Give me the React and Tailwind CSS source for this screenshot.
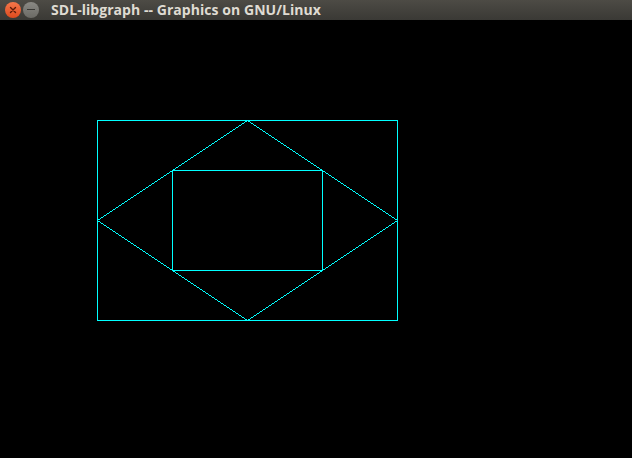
export default function App() {
  return (
    <div className="w-[632px] h-[458px] flex flex-col bg-black overflow-hidden">
      {/* title bar */}
      <div className="h-[20px] flex items-center bg-gradient-to-b from-[#4d4b45] to-[#3a3935] shrink-0">
        <div className="flex items-center gap-[2px] pl-[5px] -mt-[1px]">
          <div className="w-[16px] h-[16px] rounded-full bg-gradient-to-b from-[#f4764a] to-[#dd4a1c] flex items-center justify-center">
            <svg width="8" height="8" viewBox="0 0 8 8">
              <path d="M1.5 1.5 L6.5 6.5 M6.5 1.5 L1.5 6.5" stroke="#5a1a08" strokeWidth="1.4" strokeLinecap="round" />
            </svg>
          </div>
          <div className="w-[16px] h-[16px] rounded-full bg-gradient-to-b from-[#8a8984] to-[#6b6a65] flex items-center justify-center">
            <div className="w-[8px] h-[1.5px] bg-[#3a3935]" />
          </div>
        </div>
        <span
          className="ml-[12px] text-[14px] font-bold text-[#dfdbd2] leading-none tracking-[0.05px]"
          style={{ fontFamily: '"Open Sans", "DejaVu Sans", sans-serif' }}
        >
          SDL-libgraph -- Graphics on GNU/Linux
        </span>
      </div>

      {/* canvas */}
      <svg width="632" height="438" viewBox="0 20 632 438" shapeRendering="crispEdges" className="block">
        <g stroke="#00ffff" strokeWidth="1" fill="none">
          <rect x="97.5" y="120.5" width="300" height="200" />
          <rect x="172.5" y="170.5" width="150" height="100" />
          <polygon points="247.5,120.5 397.5,220.5 247.5,320.5 97.5,220.5" />
        </g>
      </svg>
    </div>
  );
}
